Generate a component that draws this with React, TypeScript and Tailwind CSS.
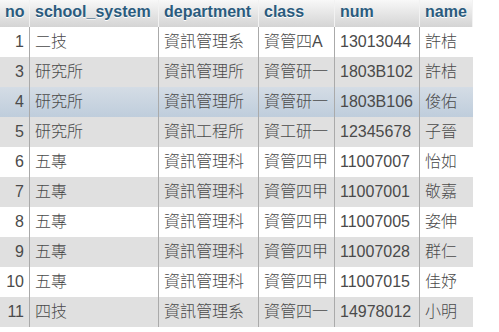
import React from 'react';

const rows = [
  ['1', '二技', '資訊管理系', '資管四A', '13013044', '許桔'],
  ['3', '研究所', '資訊管理所', '資管研一', '1803B102', '許桔'],
  ['4', '研究所', '資訊管理所', '資管研一', '1803B106', '俊佑'],
  ['5', '研究所', '資訊工程所', '資工研一', '12345678', '子晉'],
  ['6', '五專', '資訊管理科', '資管四甲', '11007007', '怡如'],
  ['7', '五專', '資訊管理科', '資管四甲', '11007001', '敬嘉'],
  ['8', '五專', '資訊管理科', '資管四甲', '11007005', '姿伸'],
  ['9', '五專', '資訊管理科', '資管四甲', '11007028', '群仁'],
  ['10', '五專', '資訊管理科', '資管四甲', '11007015', '佳妤'],
  ['11', '四技', '資訊管理系', '資管四一', '14978012', '小明'],
];

const headers = ['no', 'school_system', 'department', 'class', 'num', 'name'];
const widths = ['w-[30px]', 'w-[129px]', 'w-[100px]', 'w-[76px]', 'w-[85px]', 'w-[53px]'];

export default function App() {
  return (
    <div
      className="w-[499px] h-[332px] overflow-hidden bg-white"
      style={{ fontFamily: '"Liberation Sans", "Noto Sans CJK TC", sans-serif' }}
    >
      <div className="flex h-[27px] bg-gradient-to-b from-[#f8f8f8] to-[#d4d4d4] w-[473px]">
        {headers.map((h, i) => (
          <div
            key={h}
            className={`${widths[i]} shrink-0 border-r border-[#f2f2f2] px-[5px] pb-[4px] flex items-center text-[16px] font-bold text-[#2a5b7e] [text-shadow:0_1px_0_#fff]`}
          >
            {h}
          </div>
        ))}
      </div>
      {rows.map((r, ri) => {
        const bg =
          ri === 2
            ? 'bg-gradient-to-b from-[#d4dce5] to-[#bfcddc]'
            : ri % 2 === 0
              ? 'bg-white'
              : 'bg-[#e0e0e0]';
        return (
          <div key={ri} className={`flex h-[30px] w-[473px] ${bg}`}>
            {r.map((c, ci) => (
              <div
                key={ci}
                className={`${widths[ci]} shrink-0 ${ci < 5 ? 'border-r border-[#aaaaaa]' : ''} px-[5px] flex items-center text-[16px] text-[#4a4a4a] font-light whitespace-nowrap ${ci === 0 ? 'justify-end' : ''}`}
              >
                {c}
              </div>
            ))}
          </div>
        );
      })}
    </div>
  );
}
